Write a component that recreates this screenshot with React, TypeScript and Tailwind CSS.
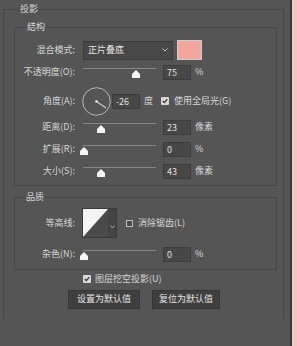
import React from "react";

const Slider = ({ pos }: { pos: number }) => (
  <div className="relative w-[73px] h-[16px] shrink-0">
    <div className="absolute left-0 right-0 top-[4px] h-px bg-[#858585]" />
    <svg
      className="absolute top-[6px]"
      style={{ left: pos - 4 }}
      width="8"
      height="8"
      viewBox="0 0 8 8"
    >
      <path d="M4 0 L8 4 V8 H0 V4 Z" fill="#f4f4f4" />
    </svg>
  </div>
);

const Input = ({ v }: { v: string }) => (
  <div className="w-[28px] h-[15px] shrink-0 bg-[#474747] border border-[#3c3c3c] pl-[3px] leading-[13px] text-[#e0e0e0]">
    {v}
  </div>
);

const Check = ({ on }: { on: boolean }) =>
  on ? (
    <div className="w-[8px] h-[8px] shrink-0 bg-[#d9d9d9] rounded-[1px] flex items-center justify-center">
      <svg width="6" height="6" viewBox="0 0 6 6">
        <path d="M0.8 3 L2.4 4.6 L5.2 1.2" stroke="#333" strokeWidth="1.3" fill="none" />
      </svg>
    </div>
  ) : (
    <div className="w-[7px] h-[7px] shrink-0 border border-[#bdbdbd] bg-[#4a4a4a]" />
  );

const Label = ({ t }: { t: string }) => (
  <div className="w-[60px] shrink-0 text-right whitespace-nowrap">{t}</div>
);

const SliderRow = ({
  label,
  pos,
  v,
  unit,
  cls,
}: {
  label: string;
  pos: number;
  v: string;
  unit: string;
  cls: string;
}) => (
  <div className={`flex items-center h-[16px] ${cls}`}>
    <Label t={label} />
    <div className="ml-[8px]">
      <Slider pos={pos} />
    </div>
    <div className="ml-[7px]">
      <Input v={v} />
    </div>
    <div className="ml-[4px] whitespace-nowrap">{unit}</div>
  </div>
);

export default function App() {
  return (
    <div className="w-[297px] h-[346px] bg-[#555555] flex font-['Noto_Sans_CJK_SC','Noto_Sans',sans-serif] text-[9px] leading-[12px] text-[#d6d6d6] overflow-hidden">
      <div className="w-[292px] h-full border-r-2 border-[#3a3a3a] pt-[3px] pl-[3px]">
        <fieldset className="w-[281px] border border-[#474747] border-b-[#525252] pl-[10px] pr-[6px] pb-[9px]">
          <legend className="ml-[5px] px-[1px] leading-[12px]">投影</legend>

          <fieldset className="mt-[6px] w-[263px] border border-[#474747] pb-[6px]">
            <legend className="ml-[11px] px-[1px] leading-[12px]">结构</legend>

            <div className="flex items-center h-[20px] mt-[7px]">
              <Label t="混合模式:" />
              <div className="ml-[8px] w-[90px] h-[19px] bg-[#484848] border border-[#3b3b3b] flex items-center pl-[4px] pr-[4px] justify-between">
                <span className="text-[#e4e4e4]">正片叠底</span>
                <svg width="6" height="4" viewBox="0 0 6 4">
                  <path d="M0.5 0.5 L3 3 L5.5 0.5" stroke="#bdbdbd" fill="none" />
                </svg>
              </div>
              <div className="ml-[4px] w-[25px] h-[20px] bg-[#f2a59d] border border-[#cfcfcf]" />
            </div>

            <SliderRow label="不透明度(O):" pos={53} v="75" unit="%" cls="mt-[4px]" />

            <div className="flex items-center h-[32px] mt-[5px]">
              <Label t="角度(A):" />
              <svg className="ml-[7px] shrink-0" width="29" height="29" viewBox="0 0 29 29">
                <circle cx="14.5" cy="14.5" r="13.8" stroke="#b8b8b8" strokeWidth="1" fill="none" />
                <line x1="14.5" y1="14.5" x2="24" y2="21" stroke="#c8c8c8" strokeWidth="1.2" />
                <circle cx="14.5" cy="14.5" r="1.4" fill="#d8d8d8" />
              </svg>
              <div className="ml-[1px]">
                <Input v="-26" />
              </div>
              <div className="ml-[4px]">度</div>
              <div className="ml-[8px]">
                <Check on />
              </div>
              <div className="ml-[5px] whitespace-nowrap">使用全局光(G)</div>
            </div>

            <SliderRow label="距离(D):" pos={18} v="23" unit="像素" cls="mt-[2px]" />
            <SliderRow label="扩展(R):" pos={1} v="0" unit="%" cls="mt-[6px]" />
            <SliderRow label="大小(S):" pos={18} v="43" unit="像素" cls="mt-[6px]" />
          </fieldset>

          <fieldset className="mt-[5px] w-[263px] border border-[#474747] pb-[7px]">
            <legend className="ml-[10px] px-[1px] leading-[12px]">品质</legend>

            <div className="flex items-center h-[30px] mt-[5px]">
              <Label t="等高线:" />
              <div className="ml-[7px] flex h-[30px] border border-[#3a3a3a]">
                <svg width="25" height="28" viewBox="0 0 25 28">
                  <rect width="25" height="28" fill="#4a4a4a" />
                  <path d="M0 0 H25 L0 28 Z" fill="#f4f4f4" />
                </svg>
                <div className="w-[8px] h-full bg-[#444444] flex items-end justify-center pb-[8px]">
                  <svg width="5" height="4" viewBox="0 0 5 4">
                    <path d="M0.5 0.5 L2.5 3 L4.5 0.5" stroke="#a8a8a8" fill="none" />
                  </svg>
                </div>
              </div>
              <div className="ml-[9px]">
                <Check on={false} />
              </div>
              <div className="ml-[5px] whitespace-nowrap">消除锯齿(L)</div>
            </div>

            <SliderRow label="杂色(N):" pos={1} v="0" unit="%" cls="mt-[8px]" />
          </fieldset>

          <div className="flex items-center h-[12px] mt-[3px] pl-[69px]">
            <Check on />
            <div className="ml-[4px] whitespace-nowrap">图层挖空投影(U)</div>
          </div>

          <div className="flex items-center h-[20px] mt-[4px] pl-[54px] gap-[12px]">
            <div className="w-[72px] h-[19px] bg-[#3f3f3f] border border-[#363636] flex items-center justify-center text-[#e2e2e2]">
              设置为默认值
            </div>
            <div className="w-[68px] h-[19px] bg-[#3f3f3f] border border-[#363636] flex items-center justify-center text-[#e2e2e2]">
              复位为默认值
            </div>
          </div>
        </fieldset>
      </div>
      <div className="flex-1 h-full bg-[#f2c7c2]" />
    </div>
  );
}
